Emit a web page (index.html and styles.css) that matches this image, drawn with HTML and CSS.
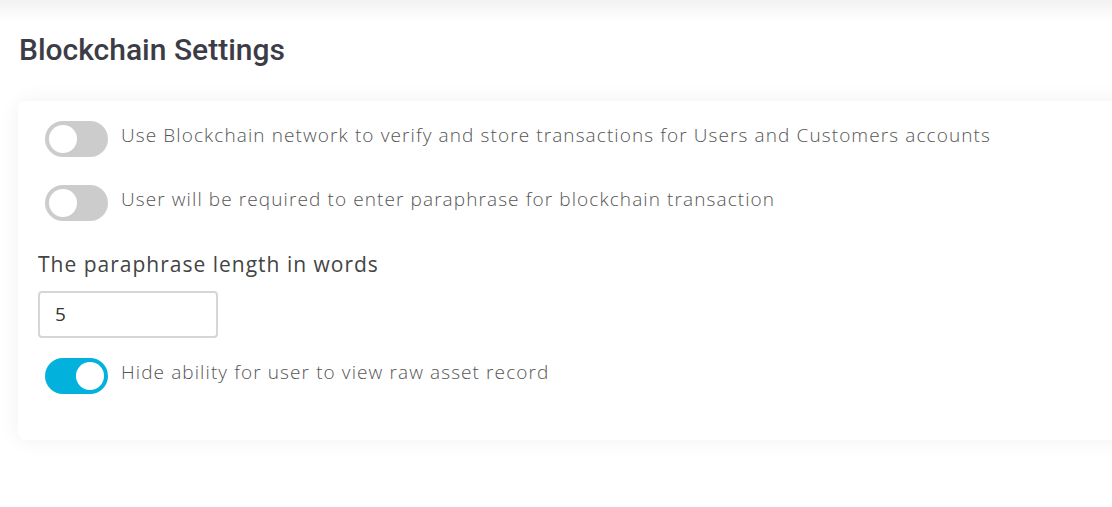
FILE: index.html
```html
<!DOCTYPE html>
<html>
<head>
<meta charset="utf-8">
<link rel="stylesheet" href="styles.css">
</head>
<body>
<div class="topbar"></div>
<main class="page">
  <h1 class="title">Blockchain Settings</h1>
  <section class="card">
    <div class="row toggle-row">
      <span class="switch"><span class="knob"></span></span>
      <span class="row-text">Use Blockchain network to verify and store transactions for Users and Customers accounts</span>
    </div>
    <div class="row toggle-row">
      <span class="switch"><span class="knob"></span></span>
      <span class="row-text">User will be required to enter paraphrase for blockchain transaction</span>
    </div>
    <div class="field">
      <label class="field-label">The paraphrase length in words</label>
      <div class="input">5</div>
    </div>
    <div class="row toggle-row">
      <span class="switch on"><span class="knob"></span></span>
      <span class="row-text">Hide ability for user to view raw asset record</span>
    </div>
  </section>
</main>
</body>
</html>
```
FILE: styles.css
```css
html, body {
  margin: 0;
  padding: 0;
  background: #ffffff;
  overflow: hidden;
}
body {
  width: 1112px;
  height: 507px;
}
.topbar {
  height: 22px;
  background: linear-gradient(to bottom, #f2f2f2, #ffffff);
}
.page {
  padding: 0 0 0 18px;
}
.title {
  margin: 8px 0 0 1px;
  font-family: Roboto, "Liberation Sans", sans-serif;
  font-weight: 500;
  font-size: 30px;
  line-height: 40px;
  color: #3c3c46;
}
.card {
  margin-top: 31px;
  margin-right: -40px;
  background: #fff;
  border-radius: 8px;
  box-shadow: 0 0 22px rgba(0, 0, 0, 0.06);
  padding: 20px 20px 47px 20px;
  height: 272px;
}
.row {
  display: flex;
  align-items: flex-start;
}
.toggle-row {
  padding-left: 7px;
  margin-bottom: 28px;
}
.switch {
  flex: none;
  width: 63px;
  height: 36px;
  border-radius: 18px;
  background: #cccccc;
  display: flex;
  align-items: center;
  padding: 0 4px;
  box-sizing: border-box;
}
.switch .knob {
  width: 28px;
  height: 28px;
  border-radius: 50%;
  background: #ffffff;
}
.switch.on {
  background: #03b2dc;
  justify-content: flex-end;
}
.row-text {
  margin-left: 13px;
  font-family: "Open Sans", "Liberation Sans", sans-serif;
  font-weight: 300;
  font-size: 19px;
  letter-spacing: 1.1px;
  line-height: 28px;
  color: #555555;
}
.field {
  margin-top: 1px;
}
.field-label {
  display: block;
  font-family: "Open Sans", "Liberation Sans", sans-serif;
  font-weight: 500;
  font-size: 21px;
  letter-spacing: 1px;
  line-height: 30px;
  color: #444444;
}
.input {
  margin-top: 12px;
  width: 180px;
  height: 47px;
  box-sizing: border-box;
  border: 2px solid #d4d6da;
  border-radius: 4px;
  padding: 0 15px;
  font-family: "Open Sans", "Liberation Sans", sans-serif;
  font-size: 19px;
  line-height: 43px;
  color: #333;
  margin-bottom: 20px;
}
```
